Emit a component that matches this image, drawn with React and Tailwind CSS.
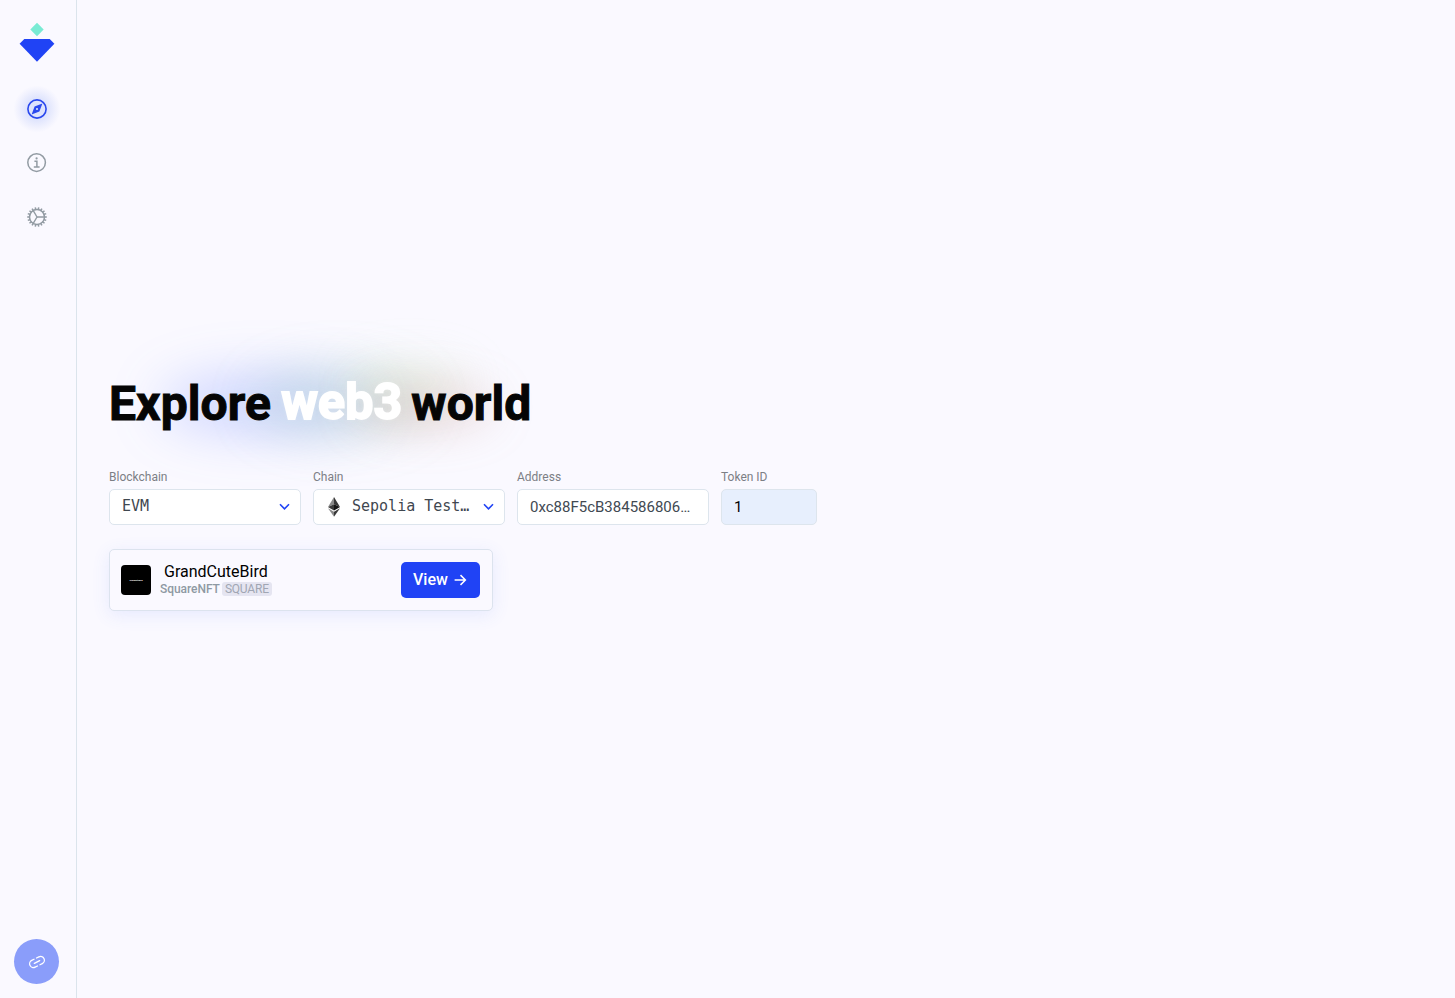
import React from "react";

const MONO = "font-['DejaVu_Sans_Mono','Liberation_Mono',monospace]";

function Logo() {
  return (
    <svg width="36" height="40" viewBox="0 0 36 40" className="block">
      <path d="M18 0.8 L24.7 7.5 L18 14.2 L11.3 7.5Z" fill="#79ebd4" />
      <path d="M5.3 17 H30.7 L35.4 21.7 L18 39.7 L0.6 21.7Z" fill="#2043f5" />
    </svg>
  );
}

function CompassIcon() {
  return (
    <svg width="22" height="22" viewBox="0 0 22 22" fill="none" className="relative">
      <circle cx="11" cy="11" r="9.1" stroke="#2a48ee" strokeWidth="1.6" />
      <path
        d="M16.4 5.6 L13.4 13.4 L5.6 16.4 L8.6 8.6Z M11 9.9 A1.1 1.1 0 1 0 11 12.1 A1.1 1.1 0 1 0 11 9.9Z"
        fill="#2a48ee"
        fillRule="evenodd"
      />
    </svg>
  );
}

function InfoIcon() {
  return (
    <svg width="22" height="22" viewBox="0 0 22 22" fill="none" stroke="#929ba3" strokeWidth="1.5">
      <circle cx="10.6" cy="10.6" r="8.8" />
      <path d="M8.4 9.3 H10.9 V15 M7.8 15.1 H13.6" />
      <circle cx="10.6" cy="6.4" r="1.1" fill="#929ba3" stroke="none" />
    </svg>
  );
}

function GearIcon() {
  const teeth = Array.from({ length: 18 }, (_, i) => i * 20);
  return (
    <svg width="22" height="22" viewBox="0 0 22 22" fill="none" stroke="#929ba3" strokeWidth="1.5">
      <circle cx="11" cy="11" r="7.5" />
      {teeth.map((a) => (
        <path key={a} d="M18.2 11 H20.8" transform={`rotate(${a} 11 11)`} />
      ))}
      <path d="M11 11 H18 M11 11 L7.4 4.8 M11 11 L7.4 17.2" strokeWidth="1.4" />
    </svg>
  );
}

function LinkIcon() {
  return (
    <svg
      width="18"
      height="18"
      viewBox="0 0 18 18"
      fill="none"
      stroke="#ffffff"
      strokeWidth="1.3"
      strokeLinecap="round"
      className="ml-px"
    >
      <g transform="rotate(-27 9 9)">
        <path d="M7.6 5.2 H5 A3.8 3.8 0 0 0 5 12.8 H7.6" />
        <path d="M10.4 5.2 H13 A3.8 3.8 0 0 1 13 12.8 H10.4" />
        <path d="M6 9 H12" />
      </g>
    </svg>
  );
}

function EthIcon() {
  return (
    <svg width="12" height="20" viewBox="0 0 12 20" className="shrink-0">
      <path d="M6 0 L0 10 L6 7.3Z" fill="#8a8a8a" />
      <path d="M6 0 L12 10 L6 7.3Z" fill="#393939" />
      <path d="M0 10 L6 7.3 V13.6Z" fill="#3b3b3b" />
      <path d="M12 10 L6 7.3 V13.6Z" fill="#141414" />
      <path d="M0 11.2 L6 14.8 V19.7Z" fill="#8a8a8a" />
      <path d="M12 11.2 L6 14.8 V19.7Z" fill="#393939" />
    </svg>
  );
}

function Chevron() {
  return (
    <svg width="11" height="8" viewBox="0 0 11 8" fill="none" className="ml-auto shrink-0">
      <path d="M1 1.3 L5.5 5.9 L10 1.3" stroke="#2043f5" strokeWidth="1.6" />
    </svg>
  );
}

function Field({ label, width, children }) {
  return (
    <div className={width}>
      <div className="mb-1 h-4 text-[12px] leading-4 text-[#7c7f85]">{label}</div>
      {children}
    </div>
  );
}

const BOX = "flex h-9 items-center rounded-[5px] border border-[#dde5ed]";

export default function App() {
  return (
    <div className="flex h-[998px] w-full overflow-hidden bg-[#faf9ff] font-[Roboto,sans-serif]">
      <aside className="flex w-[77px] shrink-0 flex-col items-center border-r border-[#dbe4ec] pr-[2px] pt-[22px] pb-[14px]">
        <Logo />
        <nav className="mt-[25px] flex flex-col items-center">
          <div className="relative flex h-11 w-11 items-center justify-center">
            <div className="absolute -inset-1 rounded-full bg-[radial-gradient(circle,#d9dffc_0%,#e0e5fd_30%,#f0f1fe_50%,#faf9ff_64%)]" />
            <CompassIcon />
          </div>
          <div className="mt-[10px] flex h-11 w-11 items-center justify-center">
            <InfoIcon />
          </div>
          <div className="mt-[10px] flex h-11 w-11 items-center justify-center">
            <GearIcon />
          </div>
        </nav>
        <button className="mr-px mt-auto flex h-[45px] w-[45px] items-center justify-center rounded-full bg-[#8a9dfa]">
          <LinkIcon />
        </button>
      </aside>

      <main className="flex flex-col items-start pl-8 pt-[371px]">
        <div className="relative h-16 w-[422px]">
          <div className="absolute left-[50px] top-[4px] h-[58px] w-[210px] rounded-[50%] bg-[#4c6cff]/25 blur-[26px]" />
          <div className="absolute left-[145px] top-[-2px] h-[66px] w-[170px] rounded-[50%] bg-[#78b8a0]/22 blur-[24px]" />
          <div className="absolute left-[235px] top-[-12px] h-[44px] w-[130px] rounded-[50%] bg-[#c8e8b0]/18 blur-[20px]" />
          <div className="absolute left-[245px] top-[14px] h-[44px] w-[140px] rounded-[50%] bg-[#b8786c]/24 blur-[22px]" />
          <h1 className="relative top-px whitespace-nowrap text-[48px] font-bold leading-[64px] tracking-[0.12px] text-[#050505] [-webkit-text-stroke:1px_#050505]">
            Explore{" "}
            <span className="relative -top-px -ml-[2px] text-[50px] leading-[50px] text-white [-webkit-text-stroke:1.8px_white] [text-shadow:0_0_5px_rgba(255,255,255,0.3)]">
              web3
            </span>{" "}
            <span className="-ml-[3px]">world</span>
          </h1>
        </div>

        <div className="relative mt-[34px] flex gap-3">
          <Field label="Blockchain" width="w-48">
            <div className={`${BOX} bg-white pl-3 pr-[10px]`}>
              <span className={`mb-0.5 text-[15px] leading-5 text-[#3f474f] ${MONO}`}>EVM</span>
              <Chevron />
            </div>
          </Field>
          <Field label="Chain" width="w-48">
            <div className={`${BOX} bg-white pl-[14px] pr-[10px]`}>
              <EthIcon />
              <span className={`mb-0.5 ml-3 whitespace-nowrap text-[15px] leading-5 text-[#3f474f] ${MONO}`}>
                Sepolia Test…
              </span>
              <Chevron />
            </div>
          </Field>
          <Field label="Address" width="w-48">
            <div className={`${BOX} bg-white pl-3 text-[15px] text-[#414952]`}>0xc88F5cB384586806…</div>
          </Field>
          <Field label="Token ID" width="w-24">
            <div className={`${BOX} bg-[#e7effd] pl-3 text-[15px] text-black`}>1</div>
          </Field>
        </div>

        <div className="relative mt-6 flex h-[62px] w-96 items-center rounded-[5px] border border-[#dce3ee] bg-[#faf9ff] pl-[11px] pr-3 shadow-[0_4px_18px_rgba(70,110,250,0.11)]">
          <div className="flex h-[30px] w-[30px] items-center justify-center overflow-hidden rounded-[4px] bg-black">
            <span className="text-[2px] font-bold leading-none text-white">GrandCuteBird</span>
          </div>
          <div className="mb-0.5 ml-[9px] flex flex-col">
            <div className="h-5 pl-1 text-[16px] leading-5 text-black">GrandCuteBird</div>
            <div className="flex h-[14px] items-center text-[12px] font-medium leading-[14px] tracking-[-0.05px] text-[#8e99a3]">
              SquareNFT
              <span className="ml-[2px] rounded-[3px] bg-[#e5e5f1] px-[3px] font-normal tracking-[-0.2px] text-[#a0a6b3]">
                SQUARE
              </span>
            </div>
          </div>
          <button className="ml-auto flex h-9 w-[79px] items-center rounded-[5px] bg-[#2043f5] pl-3 text-[16px] font-medium text-white">
            View
            <svg width="13" height="12" viewBox="0 0 13 12" fill="none" className="ml-[6px]">
              <path d="M0.6 6 H11.2 M6.5 1.1 L11.4 6 L6.5 10.9" stroke="#fff" strokeWidth="1.5" />
            </svg>
          </button>
        </div>
      </main>
    </div>
  );
}
